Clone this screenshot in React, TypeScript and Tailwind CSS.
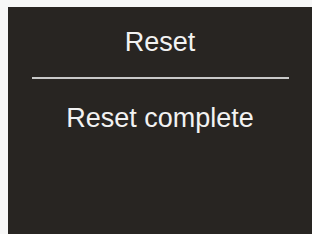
export default function App() {
  return (
    <div className="w-[312px] h-[234px] bg-[#f7f7f7] pl-[8px] pt-[7px] overflow-hidden">
      <div
        className="h-[227px] bg-[#282522] flex flex-col items-center pt-[20px]"
        style={{ fontFamily: '"Liberation Sans", Arial, sans-serif' }}
      >
        <div className="text-[27px] leading-[31px] text-[#f2f2f2]">Reset</div>
        <div className="mt-[19px] h-[2px] w-[257px] bg-[#c9c9c9]" />
        <div className="mt-[24px] text-[27px] leading-[31px] text-[#f2f2f2]">Reset complete</div>
      </div>
    </div>
  );
}
